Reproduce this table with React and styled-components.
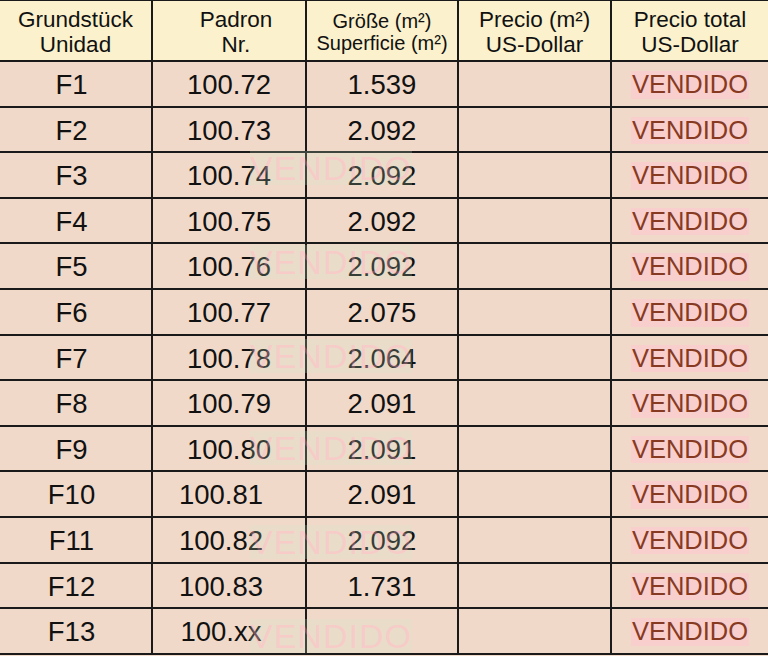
import React from "react";
import styled, { createGlobalStyle } from "styled-components";

const GlobalStyle = createGlobalStyle`
  html, body {
    margin: 0;
    padding: 0;
    background: #f0d9c9;
  }
  body {
    font-family: "Liberation Sans", Arial, sans-serif;
    color: #111;
  }
`;

const Sheet = styled.div`
  position: relative;
  width: 768px;
  height: 656px;
  overflow: hidden;
  border-top: 1px solid #1a1a1a;
  box-sizing: border-box;
`;

const Row = styled.div`
  display: grid;
  grid-template-columns: 153px 154px 152px 153px 1fr;
  height: ${(p) => (p.$head ? "61px" : "45.6px")};
  background: ${(p) => (p.$head ? "#fbf1cc" : "#f0d9c9")};
  border-bottom: 2px solid #1a1a1a;
  box-sizing: border-box;
`;

// $nudge moves the text inside the cell (negative = left) without moving the grid lines
const Cell = styled.div`
  display: flex;
  flex-direction: column;
  align-items: center;
  justify-content: center;
  border-right: ${(p) => (p.$last ? "none" : "2px solid #1a1a1a")};
  font-size: ${(p) => (p.$head ? (p.$small ? "20px" : "22.5px") : "27.5px")};
  line-height: ${(p) => (p.$head ? "1.12" : "1")};
  text-align: center;
  padding-left: ${(p) => (p.$nudge > 0 ? p.$nudge * 2 : 0)}px;
  padding-right: ${(p) => (p.$nudge < 0 ? -p.$nudge * 2 : 0)}px;
  padding-top: ${(p) => (p.$head ? "3px" : "2px")};
  box-sizing: border-box;
  white-space: nowrap;
`;

const Sold = styled.span`
  color: #873a22;
  background: #f8cfcc;
  font-size: 25.5px;
  padding: 1px 1px;
`;

const Ghost = styled.span`
  position: absolute;
  left: 250px;
  font-size: 34px;
  color: #ffb8c8;
  background: rgba(205, 240, 205, 0.5);
  opacity: 0.4;
  letter-spacing: 1px;
  pointer-events: none;
  line-height: 1;
`;

const rows = [
  ["F1", "100.72", "1.539"],
  ["F2", "100.73", "2.092"],
  ["F3", "100.74", "2.092"],
  ["F4", "100.75", "2.092"],
  ["F5", "100.76", "2.092"],
  ["F6", "100.77", "2.075"],
  ["F7", "100.78", "2.064"],
  ["F8", "100.79", "2.091"],
  ["F9", "100.80", "2.091"],
  ["F10", "100.81", "2.091"],
  ["F11", "100.82", "2.092"],
  ["F12", "100.83", "1.731"],
  ["F13", "100.xx", ""],
];

const ghosts = [150, 244, 338, 430, 524, 618];

export default function App() {
  return (
    <>
      <GlobalStyle />
      <Sheet>
        <Row $head>
          <Cell $head>
            <span>Grundstück</span>
            <span>Unidad</span>
          </Cell>
          <Cell $head $nudge={7}>
            <span>Padron</span>
            <span>Nr.</span>
          </Cell>
          <Cell $head $small>
            <span>Größe (m²)</span>
            <span>Superficie (m²)</span>
          </Cell>
          <Cell $head>
            <span>Precio (m²)</span>
            <span>US-Dollar</span>
          </Cell>
          <Cell $head $last>
            <span>Precio total</span>
            <span>US-Dollar</span>
          </Cell>
        </Row>
        {rows.map(([lot, padron, size], i) => (
          <Row key={lot}>
            <Cell $nudge={-4}>{lot}</Cell>
            <Cell $nudge={i >= 9 ? -8 : 0}>{padron}</Cell>
            <Cell>{size}</Cell>
            <Cell />
            <Cell $last>
              <Sold>VENDIDO</Sold>
            </Cell>
          </Row>
        ))}
        {ghosts.map((top) => (
          <Ghost key={top} style={{ top }}>
            VENDIDO
          </Ghost>
        ))}
      </Sheet>
    </>
  );
}
